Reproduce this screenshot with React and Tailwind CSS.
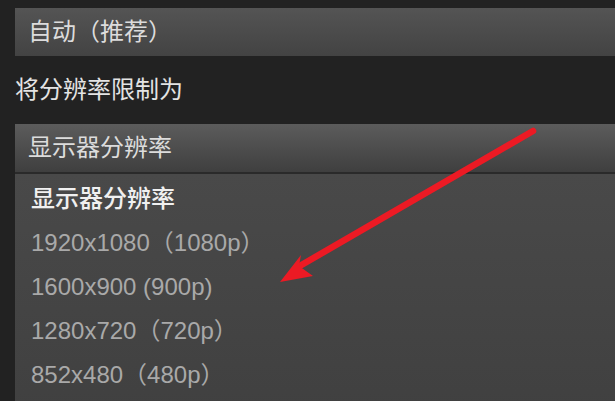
import React from "react";

const font = { fontFamily: '"Liberation Sans", "Noto Sans CJK SC", sans-serif' };

function Bar({ children, bright }) {
  return (
    <div
      className={
        bright
          ? "h-[48px] flex items-center pl-[13px] bg-gradient-to-b from-[#5c5c5c] to-[#3f3f3f] text-[#dcdcdc] text-[24px]"
          : "h-[48px] flex items-center pl-[13px] bg-gradient-to-b from-[#545454] to-[#434343] text-[#dcdcdc] text-[24px]"
      }
    >
      {children}
    </div>
  );
}

function App() {
  const options = [
    "1920x1080（1080p）",
    "1600x900 (900p)",
    "1280x720（720p）",
    "852x480（480p）",
  ];

  return (
    <div className="relative w-[615px] h-[401px] overflow-hidden bg-[#222222]" style={font}>
      <div className="pl-[15px] pt-[8px]">
        <Bar>自动（推荐）</Bar>
        <div className="h-[68px] flex items-center text-[24px] text-[#e4e4e4]">将分辨率限制为</div>
        <Bar bright>显示器分辨率</Bar>
        <div className="h-[2px] bg-[#2a2a2a]" />
        <div className="h-[300px] pt-[3px] pl-[16px] bg-gradient-to-b from-[#494949] to-[#3e3e3e]">
          <div className="h-[44px] flex items-center text-[24px] text-[#f0f0f0] font-medium">显示器分辨率</div>
          {options.map((o) => (
            <div key={o} className="h-[44px] flex items-center text-[24px] text-[#a9a9a9]">
              {o}
            </div>
          ))}
        </div>
      </div>
      <svg className="absolute left-0 top-0" width="615" height="401" viewBox="0 0 615 401">
        <line x1="533" y1="131" x2="298" y2="267" stroke="#ec1a24" strokeWidth="6.5" strokeLinecap="round" />
        <polygon points="280,282 301,255 299,266 313,276" fill="#ec1a24" />
      </svg>
    </div>
  );
}

export default App;
